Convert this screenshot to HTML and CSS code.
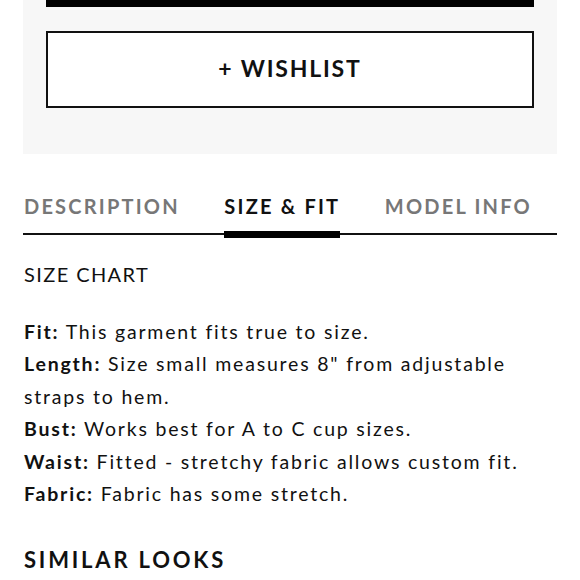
FILE: index.html
```html
<!DOCTYPE html>
<html>
<head>
<meta charset="utf-8">
<link rel="stylesheet" href="styles.css">
</head>
<body>
<div class="panel">
  <div class="bag-bar"></div>
  <button class="wishlist">+ WISHLIST</button>
</div>
<div class="tabs">
  <div class="tab">DESCRIPTION</div>
  <div class="tab active">SIZE &amp; FIT</div>
  <div class="tab">MODEL INFO</div>
</div>
<div class="content">
  <div class="size-chart">SIZE CHART</div>
  <div class="details">
    <p><b>Fit:</b> This garment fits true to size.</p>
    <p><b>Length:</b> Size small measures 8" from adjustable straps to hem.</p>
    <p><b>Bust:</b> Works best for A to C cup sizes.</p>
    <p><b>Waist:</b> Fitted - stretchy fabric allows custom fit.</p>
    <p><b>Fabric:</b> Fabric has some stretch.</p>
  </div>
  <h2 class="similar">SIMILAR LOOKS</h2>
</div>
</body>
</html>
```
FILE: styles.css
```css
html, body {
  margin: 0;
  padding: 0;
  background: #fff;
}
body {
  font-family: Lato, "Liberation Sans", sans-serif;
  color: #111;
  overflow: hidden;
}
.panel {
  margin: 0 23px;
  background: #f7f7f7;
  padding: 0 23px 46px 23px;
  display: flex;
  flex-direction: column;
  gap: 24px;
}
.bag-bar {
  height: 7px;
  background: #000;
}
.wishlist {
  height: 77px;
  background: #fff;
  border: 2px solid #111;
  font-family: inherit;
  font-size: 23px;
  font-weight: 700;
  letter-spacing: 1.8px;
  color: #111;
  padding: 0 0 4px 0;
}
.tabs {
  margin: 40px 23px 0 23px;
  padding: 0 25px 0 1px;
  display: flex;
  justify-content: space-between;
  align-items: flex-start;
  border-bottom: 2px solid #111;
}
.tab {
  font-size: 20px;
  line-height: 24px;
  font-weight: 700;
  letter-spacing: 2.2px;
  color: #777;
  padding-bottom: 15px;
}
.tab.active {
  color: #111;
  padding-bottom: 13px;
  border-bottom: 7px solid #000;
  margin-bottom: -5px;
}
.content {
  margin: 0 24px;
}
.size-chart {
  margin-top: 27px;
  font-size: 20px;
  line-height: 24px;
  letter-spacing: 1.4px;
}
.details {
  margin-top: 30px;
}
.details p {
  margin: 0;
  font-size: 19.5px;
  line-height: 32.4px;
  letter-spacing: 1.8px;
}
.details b {
  font-weight: 700;
}
.similar {
  margin: 37px 0 0 0;
  font-size: 22px;
  line-height: 26px;
  font-weight: 700;
  letter-spacing: 2.8px;
}
```
